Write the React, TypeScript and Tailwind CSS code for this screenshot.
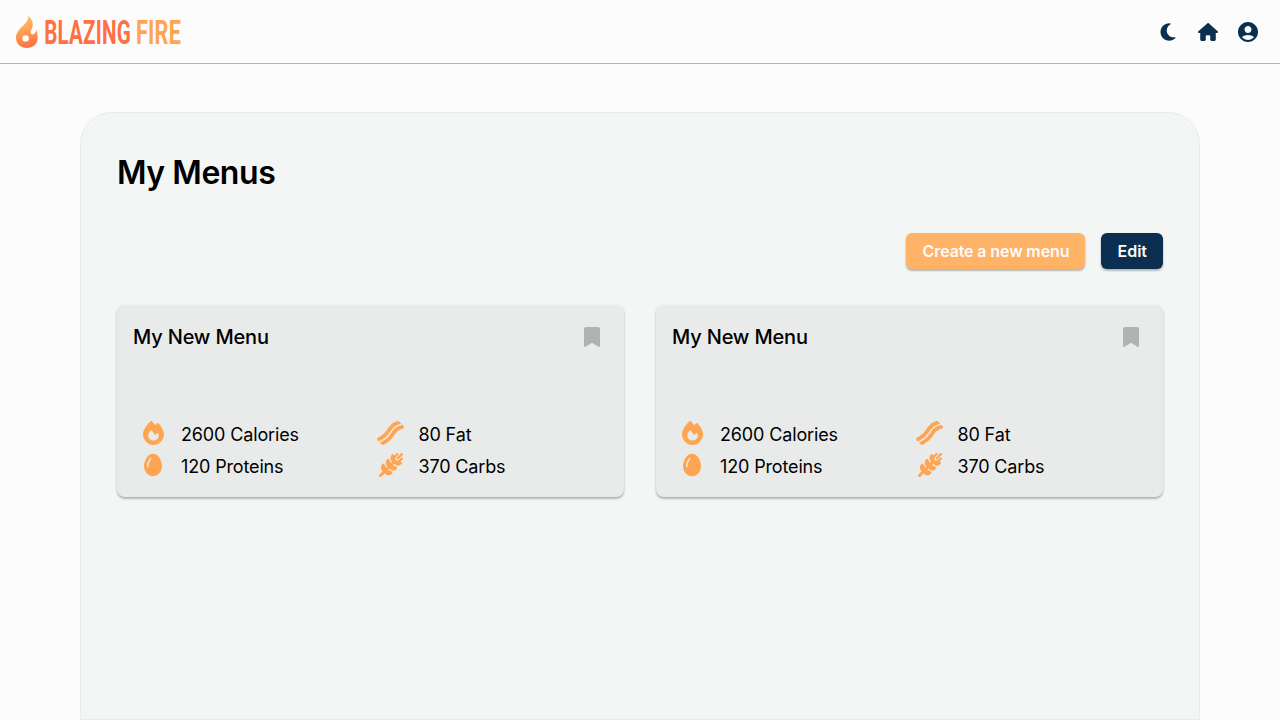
import { FaFire, FaBacon, FaEgg, FaWheatAwn, FaMoon, FaBookmark, FaHouse } from "react-icons/fa6";
import { MdAccountCircle } from "react-icons/md";
import type { ReactNode } from "react";

function Logo() {
  return (
    <svg width="166" height="32" viewBox="0 0 166 32" className="mt-px block overflow-visible" aria-label="Blazing Fire">
      <defs>
        <linearGradient id="flame" x1="0.4" y1="0" x2="0.6" y2="1">
          <stop offset="0.3" stopColor="#ffad5a" />
          <stop offset="1" stopColor="#fb6f43" />
        </linearGradient>
      </defs>
      <path
        fill="url(#flame)"
        fillRule="evenodd"
        d="M12.4 0C13 8.4 0 12 0 21.8C0 28 4.8 32 10.8 32C17 32 21.7 28 21.7 21.8C21.7 18.6 21 16 20.2 13.5C19.8 16.5 18.8 18.4 16.8 18.4C15 18.4 14.2 16.8 14.9 14.8C16 12 17 10.6 16.8 8.2C16.5 4.8 14.8 2.2 12.4 0ZM9.6 19.2A3.2 3.2 0 1 0 9.6 25.6A3.2 3.2 0 1 0 9.6 19.2Z"
      />
      <g fontFamily="Roboto, sans-serif" fontWeight="700" fontSize="33.8">
        <text transform="translate(28.2 28) scale(0.61 1)" textLength="142" lengthAdjust="spacing" fill="#ff7043">BLAZING</text>
        <text transform="translate(120 28) scale(0.64 1)" textLength="70" lengthAdjust="spacing" fill="#ffa552">FIRE</text>
      </g>
    </svg>
  );
}

function Stat({ icon, children }: { icon: ReactNode; children: ReactNode }) {
  return (
    <div className="flex h-8 items-center gap-2">
      <span className="flex w-10 shrink-0 justify-center pb-1 text-[#ffa552]">{icon}</span>
      <span className="text-lg leading-8 tracking-[-0.008em]">{children}</span>
    </div>
  );
}

function MenuCard() {
  return (
    <article className="flex h-48 flex-1 flex-col justify-between rounded-lg bg-[#e9ebea] p-4 pb-[14px] shadow-[0_2px_2px_rgba(0,0,0,0.2),0_1px_3px_rgba(0,0,0,0.12)]">
      <div className="flex items-center justify-between pr-2">
        <h2 className="text-xl leading-8 font-medium tracking-[-0.009em]">My New Menu</h2>
        <FaBookmark className="h-5 w-4 text-[#b0b3b5]" preserveAspectRatio="none" />
      </div>
      <div className="grid grid-cols-2">
        <Stat icon={<FaFire className="h-6 w-[21px]" />}>2600 Calories</Stat>
        <Stat icon={<FaBacon className="h-6 w-[27px]" />}>80 Fat</Stat>
        <Stat icon={<FaEgg className="h-6 w-[18px]" />}>120 Proteins</Stat>
        <Stat icon={<FaWheatAwn className="size-6" />}>370 Carbs</Stat>
      </div>
    </article>
  );
}

export default function App() {
  return (
    <div className="flex h-screen flex-col overflow-hidden bg-[#fcfcfc] font-['Inter',sans-serif] text-black">
      <header className="flex h-16 shrink-0 items-center justify-between border-b border-[#ffa552] pr-5 pl-4">
        <Logo />
        <nav className="flex items-center gap-4 text-[#0b2f51]">
          <span className="flex w-6 justify-center"><FaMoon className="h-5 w-4" /></span>
          <span className="flex w-6 justify-center"><FaHouse className="h-[18px] w-5" /></span>
          <MdAccountCircle size={24} />
        </nav>
      </header>
      <main className="mx-20 mt-12 flex-1 rounded-t-[32px] border border-[#e9ebea] bg-[#f4f6f5] px-9 pt-9">
        <h1 className="text-[32px] leading-12 font-semibold tracking-[-0.014em]">My Menus</h1>
        <div className="mt-9 flex justify-end gap-4">
          <button className="h-9 w-[179px] rounded-md bg-[#ffb366] font-semibold tracking-[-0.007em] text-[#fcfcfc] shadow-[0_2px_2px_rgba(0,0,0,0.2),0_1px_3px_rgba(0,0,0,0.12)]">Create a new menu</button>
          <button className="h-9 rounded-md bg-[#0b2f51] px-4 font-semibold text-[#fcfcfc] shadow-[0_2px_2px_rgba(0,0,0,0.2),0_1px_3px_rgba(0,0,0,0.12)]">Edit</button>
        </div>
        <div className="mt-9 flex gap-8">
          <MenuCard />
          <MenuCard />
        </div>
      </main>
    </div>
  );
}
